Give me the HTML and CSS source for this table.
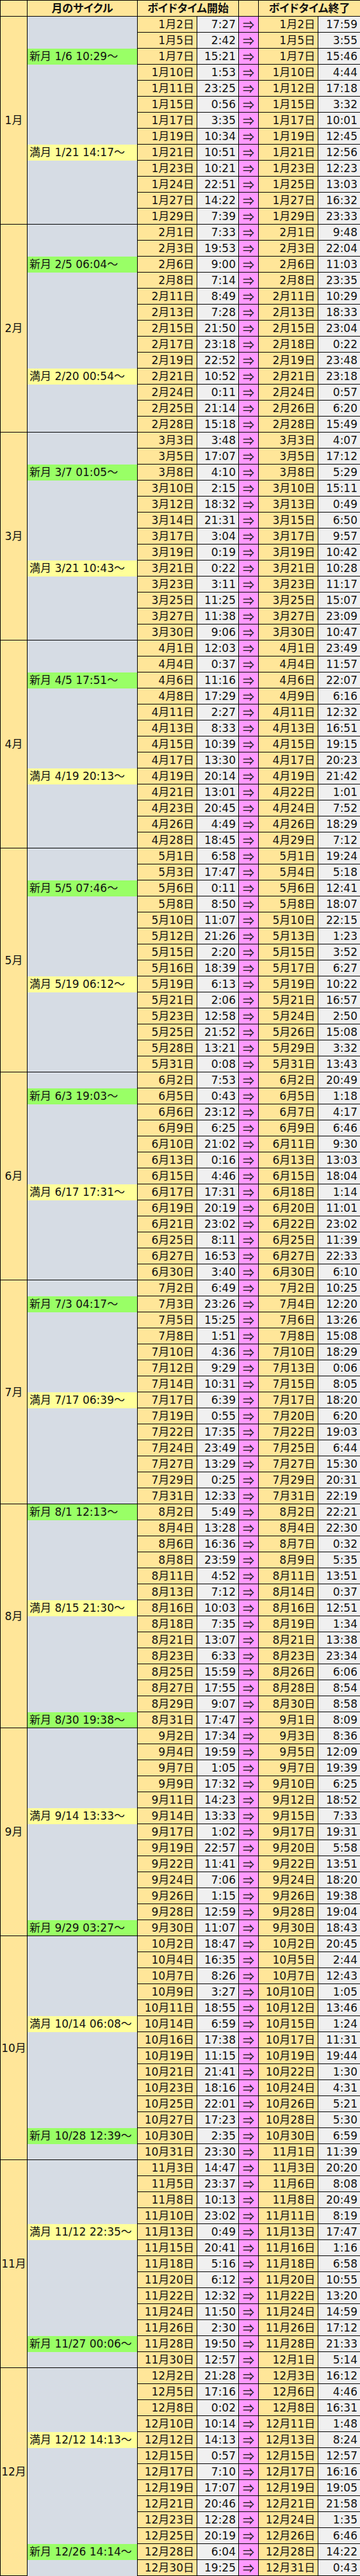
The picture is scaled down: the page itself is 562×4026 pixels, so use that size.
FILE: index.html
```html
<!DOCTYPE html>
<html lang="ja">
<head>
<meta charset="utf-8">
<title>ボイドタイム</title>
<link rel="stylesheet" href="styles.css">
</head>
<body>
<table class="vt">
<colgroup><col class="w1"><col class="w2"><col class="w3"><col class="w4"><col class="w5"><col class="w6"><col class="w7"></colgroup>
<thead>
<tr><th></th><th>月のサイクル</th><th colspan="2">ボイドタイム開始</th><th></th><th colspan="2">ボイドタイム終了</th></tr>
</thead>
<tbody class="m">
<tr><td class="mon" rowspan="13">1月</td><td class="cy" rowspan="2"></td><td class="d">1月2日</td><td class="t">7:27</td><td class="a">⇒</td><td class="d">1月2日</td><td class="t">17:59</td></tr>
<tr><td class="d">1月5日</td><td class="t">2:42</td><td class="a">⇒</td><td class="d">1月5日</td><td class="t">3:55</td></tr>
<tr><td class="nm">新月 1/6 10:29～</td><td class="d">1月7日</td><td class="t">15:21</td><td class="a">⇒</td><td class="d">1月7日</td><td class="t">15:46</td></tr>
<tr><td class="cy" rowspan="5"></td><td class="d">1月10日</td><td class="t">1:53</td><td class="a">⇒</td><td class="d">1月10日</td><td class="t">4:44</td></tr>
<tr><td class="d">1月11日</td><td class="t">23:25</td><td class="a">⇒</td><td class="d">1月12日</td><td class="t">17:18</td></tr>
<tr><td class="d">1月15日</td><td class="t">0:56</td><td class="a">⇒</td><td class="d">1月15日</td><td class="t">3:32</td></tr>
<tr><td class="d">1月17日</td><td class="t">3:35</td><td class="a">⇒</td><td class="d">1月17日</td><td class="t">10:01</td></tr>
<tr><td class="d">1月19日</td><td class="t">10:34</td><td class="a">⇒</td><td class="d">1月19日</td><td class="t">12:45</td></tr>
<tr><td class="fm">満月 1/21 14:17～</td><td class="d">1月21日</td><td class="t">10:51</td><td class="a">⇒</td><td class="d">1月21日</td><td class="t">12:56</td></tr>
<tr><td class="cy" rowspan="4"></td><td class="d">1月23日</td><td class="t">10:21</td><td class="a">⇒</td><td class="d">1月23日</td><td class="t">12:23</td></tr>
<tr><td class="d">1月24日</td><td class="t">22:51</td><td class="a">⇒</td><td class="d">1月25日</td><td class="t">13:03</td></tr>
<tr><td class="d">1月27日</td><td class="t">14:22</td><td class="a">⇒</td><td class="d">1月27日</td><td class="t">16:32</td></tr>
<tr><td class="d">1月29日</td><td class="t">7:39</td><td class="a">⇒</td><td class="d">1月29日</td><td class="t">23:33</td></tr>
</tbody>
<tbody class="m">
<tr><td class="mon" rowspan="13">2月</td><td class="cy" rowspan="2"></td><td class="d">2月1日</td><td class="t">7:33</td><td class="a">⇒</td><td class="d">2月1日</td><td class="t">9:48</td></tr>
<tr><td class="d">2月3日</td><td class="t">19:53</td><td class="a">⇒</td><td class="d">2月3日</td><td class="t">22:04</td></tr>
<tr><td class="nm">新月 2/5 06:04～</td><td class="d">2月6日</td><td class="t">9:00</td><td class="a">⇒</td><td class="d">2月6日</td><td class="t">11:03</td></tr>
<tr><td class="cy" rowspan="6"></td><td class="d">2月8日</td><td class="t">7:14</td><td class="a">⇒</td><td class="d">2月8日</td><td class="t">23:35</td></tr>
<tr><td class="d">2月11日</td><td class="t">8:49</td><td class="a">⇒</td><td class="d">2月11日</td><td class="t">10:29</td></tr>
<tr><td class="d">2月13日</td><td class="t">7:28</td><td class="a">⇒</td><td class="d">2月13日</td><td class="t">18:33</td></tr>
<tr><td class="d">2月15日</td><td class="t">21:50</td><td class="a">⇒</td><td class="d">2月15日</td><td class="t">23:04</td></tr>
<tr><td class="d">2月17日</td><td class="t">23:18</td><td class="a">⇒</td><td class="d">2月18日</td><td class="t">0:22</td></tr>
<tr><td class="d">2月19日</td><td class="t">22:52</td><td class="a">⇒</td><td class="d">2月19日</td><td class="t">23:48</td></tr>
<tr><td class="fm">満月 2/20 00:54～</td><td class="d">2月21日</td><td class="t">10:52</td><td class="a">⇒</td><td class="d">2月21日</td><td class="t">23:18</td></tr>
<tr><td class="cy" rowspan="3"></td><td class="d">2月24日</td><td class="t">0:11</td><td class="a">⇒</td><td class="d">2月24日</td><td class="t">0:57</td></tr>
<tr><td class="d">2月25日</td><td class="t">21:14</td><td class="a">⇒</td><td class="d">2月26日</td><td class="t">6:20</td></tr>
<tr><td class="d">2月28日</td><td class="t">15:18</td><td class="a">⇒</td><td class="d">2月28日</td><td class="t">15:49</td></tr>
</tbody>
<tbody class="m">
<tr><td class="mon" rowspan="13">3月</td><td class="cy" rowspan="2"></td><td class="d">3月3日</td><td class="t">3:48</td><td class="a">⇒</td><td class="d">3月3日</td><td class="t">4:07</td></tr>
<tr><td class="d">3月5日</td><td class="t">17:07</td><td class="a">⇒</td><td class="d">3月5日</td><td class="t">17:12</td></tr>
<tr><td class="nm">新月 3/7 01:05～</td><td class="d">3月8日</td><td class="t">4:10</td><td class="a">⇒</td><td class="d">3月8日</td><td class="t">5:29</td></tr>
<tr><td class="cy" rowspan="5"></td><td class="d">3月10日</td><td class="t">2:15</td><td class="a">⇒</td><td class="d">3月10日</td><td class="t">15:11</td></tr>
<tr><td class="d">3月12日</td><td class="t">18:32</td><td class="a">⇒</td><td class="d">3月13日</td><td class="t">0:49</td></tr>
<tr><td class="d">3月14日</td><td class="t">21:31</td><td class="a">⇒</td><td class="d">3月15日</td><td class="t">6:50</td></tr>
<tr><td class="d">3月17日</td><td class="t">3:04</td><td class="a">⇒</td><td class="d">3月17日</td><td class="t">9:57</td></tr>
<tr><td class="d">3月19日</td><td class="t">0:19</td><td class="a">⇒</td><td class="d">3月19日</td><td class="t">10:42</td></tr>
<tr><td class="fm">満月 3/21 10:43～</td><td class="d">3月21日</td><td class="t">0:22</td><td class="a">⇒</td><td class="d">3月21日</td><td class="t">10:28</td></tr>
<tr><td class="cy" rowspan="4"></td><td class="d">3月23日</td><td class="t">3:11</td><td class="a">⇒</td><td class="d">3月23日</td><td class="t">11:17</td></tr>
<tr><td class="d">3月25日</td><td class="t">11:25</td><td class="a">⇒</td><td class="d">3月25日</td><td class="t">15:07</td></tr>
<tr><td class="d">3月27日</td><td class="t">11:38</td><td class="a">⇒</td><td class="d">3月27日</td><td class="t">23:09</td></tr>
<tr><td class="d">3月30日</td><td class="t">9:06</td><td class="a">⇒</td><td class="d">3月30日</td><td class="t">10:47</td></tr>
</tbody>
<tbody class="m">
<tr><td class="mon" rowspan="13">4月</td><td class="cy" rowspan="2"></td><td class="d">4月1日</td><td class="t">12:03</td><td class="a">⇒</td><td class="d">4月1日</td><td class="t">23:49</td></tr>
<tr><td class="d">4月4日</td><td class="t">0:37</td><td class="a">⇒</td><td class="d">4月4日</td><td class="t">11:57</td></tr>
<tr><td class="nm">新月 4/5 17:51～</td><td class="d">4月6日</td><td class="t">11:16</td><td class="a">⇒</td><td class="d">4月6日</td><td class="t">22:07</td></tr>
<tr><td class="cy" rowspan="5"></td><td class="d">4月8日</td><td class="t">17:29</td><td class="a">⇒</td><td class="d">4月9日</td><td class="t">6:16</td></tr>
<tr><td class="d">4月11日</td><td class="t">2:27</td><td class="a">⇒</td><td class="d">4月11日</td><td class="t">12:32</td></tr>
<tr><td class="d">4月13日</td><td class="t">8:33</td><td class="a">⇒</td><td class="d">4月13日</td><td class="t">16:51</td></tr>
<tr><td class="d">4月15日</td><td class="t">10:39</td><td class="a">⇒</td><td class="d">4月15日</td><td class="t">19:15</td></tr>
<tr><td class="d">4月17日</td><td class="t">13:30</td><td class="a">⇒</td><td class="d">4月17日</td><td class="t">20:23</td></tr>
<tr><td class="fm">満月 4/19 20:13～</td><td class="d">4月19日</td><td class="t">20:14</td><td class="a">⇒</td><td class="d">4月19日</td><td class="t">21:42</td></tr>
<tr><td class="cy" rowspan="4"></td><td class="d">4月21日</td><td class="t">13:01</td><td class="a">⇒</td><td class="d">4月22日</td><td class="t">1:01</td></tr>
<tr><td class="d">4月23日</td><td class="t">20:45</td><td class="a">⇒</td><td class="d">4月24日</td><td class="t">7:52</td></tr>
<tr><td class="d">4月26日</td><td class="t">4:49</td><td class="a">⇒</td><td class="d">4月26日</td><td class="t">18:29</td></tr>
<tr><td class="d">4月28日</td><td class="t">18:45</td><td class="a">⇒</td><td class="d">4月29日</td><td class="t">7:12</td></tr>
</tbody>
<tbody class="m">
<tr><td class="mon" rowspan="14">5月</td><td class="cy" rowspan="2"></td><td class="d">5月1日</td><td class="t">6:58</td><td class="a">⇒</td><td class="d">5月1日</td><td class="t">19:24</td></tr>
<tr><td class="d">5月3日</td><td class="t">17:47</td><td class="a">⇒</td><td class="d">5月4日</td><td class="t">5:18</td></tr>
<tr><td class="nm">新月 5/5 07:46～</td><td class="d">5月6日</td><td class="t">0:11</td><td class="a">⇒</td><td class="d">5月6日</td><td class="t">12:41</td></tr>
<tr><td class="cy" rowspan="5"></td><td class="d">5月8日</td><td class="t">8:50</td><td class="a">⇒</td><td class="d">5月8日</td><td class="t">18:07</td></tr>
<tr><td class="d">5月10日</td><td class="t">11:07</td><td class="a">⇒</td><td class="d">5月10日</td><td class="t">22:15</td></tr>
<tr><td class="d">5月12日</td><td class="t">21:26</td><td class="a">⇒</td><td class="d">5月13日</td><td class="t">1:23</td></tr>
<tr><td class="d">5月15日</td><td class="t">2:20</td><td class="a">⇒</td><td class="d">5月15日</td><td class="t">3:52</td></tr>
<tr><td class="d">5月16日</td><td class="t">18:39</td><td class="a">⇒</td><td class="d">5月17日</td><td class="t">6:27</td></tr>
<tr><td class="fm">満月 5/19 06:12～</td><td class="d">5月19日</td><td class="t">6:13</td><td class="a">⇒</td><td class="d">5月19日</td><td class="t">10:22</td></tr>
<tr><td class="cy" rowspan="5"></td><td class="d">5月21日</td><td class="t">2:06</td><td class="a">⇒</td><td class="d">5月21日</td><td class="t">16:57</td></tr>
<tr><td class="d">5月23日</td><td class="t">12:58</td><td class="a">⇒</td><td class="d">5月24日</td><td class="t">2:50</td></tr>
<tr><td class="d">5月25日</td><td class="t">21:52</td><td class="a">⇒</td><td class="d">5月26日</td><td class="t">15:08</td></tr>
<tr><td class="d">5月28日</td><td class="t">13:21</td><td class="a">⇒</td><td class="d">5月29日</td><td class="t">3:32</td></tr>
<tr><td class="d">5月31日</td><td class="t">0:08</td><td class="a">⇒</td><td class="d">5月31日</td><td class="t">13:43</td></tr>
</tbody>
<tbody class="m">
<tr><td class="mon" rowspan="13">6月</td><td class="cy"></td><td class="d">6月2日</td><td class="t">7:53</td><td class="a">⇒</td><td class="d">6月2日</td><td class="t">20:49</td></tr>
<tr><td class="nm">新月 6/3 19:03～</td><td class="d">6月5日</td><td class="t">0:43</td><td class="a">⇒</td><td class="d">6月5日</td><td class="t">1:18</td></tr>
<tr><td class="cy" rowspan="5"></td><td class="d">6月6日</td><td class="t">23:12</td><td class="a">⇒</td><td class="d">6月7日</td><td class="t">4:17</td></tr>
<tr><td class="d">6月9日</td><td class="t">6:25</td><td class="a">⇒</td><td class="d">6月9日</td><td class="t">6:46</td></tr>
<tr><td class="d">6月10日</td><td class="t">21:02</td><td class="a">⇒</td><td class="d">6月11日</td><td class="t">9:30</td></tr>
<tr><td class="d">6月13日</td><td class="t">0:16</td><td class="a">⇒</td><td class="d">6月13日</td><td class="t">13:03</td></tr>
<tr><td class="d">6月15日</td><td class="t">4:46</td><td class="a">⇒</td><td class="d">6月15日</td><td class="t">18:04</td></tr>
<tr><td class="fm">満月 6/17 17:31～</td><td class="d">6月17日</td><td class="t">17:31</td><td class="a">⇒</td><td class="d">6月18日</td><td class="t">1:14</td></tr>
<tr><td class="cy" rowspan="5"></td><td class="d">6月19日</td><td class="t">20:19</td><td class="a">⇒</td><td class="d">6月20日</td><td class="t">11:01</td></tr>
<tr><td class="d">6月21日</td><td class="t">23:02</td><td class="a">⇒</td><td class="d">6月22日</td><td class="t">23:02</td></tr>
<tr><td class="d">6月25日</td><td class="t">8:11</td><td class="a">⇒</td><td class="d">6月25日</td><td class="t">11:39</td></tr>
<tr><td class="d">6月27日</td><td class="t">16:53</td><td class="a">⇒</td><td class="d">6月27日</td><td class="t">22:33</td></tr>
<tr><td class="d">6月30日</td><td class="t">3:40</td><td class="a">⇒</td><td class="d">6月30日</td><td class="t">6:10</td></tr>
</tbody>
<tbody class="m">
<tr><td class="mon" rowspan="14">7月</td><td class="cy"></td><td class="d">7月2日</td><td class="t">6:49</td><td class="a">⇒</td><td class="d">7月2日</td><td class="t">10:25</td></tr>
<tr><td class="nm">新月 7/3 04:17～</td><td class="d">7月3日</td><td class="t">23:26</td><td class="a">⇒</td><td class="d">7月4日</td><td class="t">12:20</td></tr>
<tr><td class="cy" rowspan="5"></td><td class="d">7月5日</td><td class="t">15:25</td><td class="a">⇒</td><td class="d">7月6日</td><td class="t">13:26</td></tr>
<tr><td class="d">7月8日</td><td class="t">1:51</td><td class="a">⇒</td><td class="d">7月8日</td><td class="t">15:08</td></tr>
<tr><td class="d">7月10日</td><td class="t">4:36</td><td class="a">⇒</td><td class="d">7月10日</td><td class="t">18:29</td></tr>
<tr><td class="d">7月12日</td><td class="t">9:29</td><td class="a">⇒</td><td class="d">7月13日</td><td class="t">0:06</td></tr>
<tr><td class="d">7月14日</td><td class="t">10:31</td><td class="a">⇒</td><td class="d">7月15日</td><td class="t">8:05</td></tr>
<tr><td class="fm">満月 7/17 06:39～</td><td class="d">7月17日</td><td class="t">6:39</td><td class="a">⇒</td><td class="d">7月17日</td><td class="t">18:20</td></tr>
<tr><td class="cy" rowspan="6"></td><td class="d">7月19日</td><td class="t">0:55</td><td class="a">⇒</td><td class="d">7月20日</td><td class="t">6:20</td></tr>
<tr><td class="d">7月22日</td><td class="t">17:35</td><td class="a">⇒</td><td class="d">7月22日</td><td class="t">19:03</td></tr>
<tr><td class="d">7月24日</td><td class="t">23:49</td><td class="a">⇒</td><td class="d">7月25日</td><td class="t">6:44</td></tr>
<tr><td class="d">7月27日</td><td class="t">13:29</td><td class="a">⇒</td><td class="d">7月27日</td><td class="t">15:30</td></tr>
<tr><td class="d">7月29日</td><td class="t">0:25</td><td class="a">⇒</td><td class="d">7月29日</td><td class="t">20:31</td></tr>
<tr><td class="d">7月31日</td><td class="t">12:33</td><td class="a">⇒</td><td class="d">7月31日</td><td class="t">22:19</td></tr>
</tbody>
<tbody class="m">
<tr><td class="mon" rowspan="14">8月</td><td class="nm">新月 8/1 12:13～</td><td class="d">8月2日</td><td class="t">5:49</td><td class="a">⇒</td><td class="d">8月2日</td><td class="t">22:21</td></tr>
<tr><td class="cy" rowspan="5"></td><td class="d">8月4日</td><td class="t">13:28</td><td class="a">⇒</td><td class="d">8月4日</td><td class="t">22:30</td></tr>
<tr><td class="d">8月6日</td><td class="t">16:36</td><td class="a">⇒</td><td class="d">8月7日</td><td class="t">0:32</td></tr>
<tr><td class="d">8月8日</td><td class="t">23:59</td><td class="a">⇒</td><td class="d">8月9日</td><td class="t">5:35</td></tr>
<tr><td class="d">8月11日</td><td class="t">4:52</td><td class="a">⇒</td><td class="d">8月11日</td><td class="t">13:51</td></tr>
<tr><td class="d">8月13日</td><td class="t">7:12</td><td class="a">⇒</td><td class="d">8月14日</td><td class="t">0:37</td></tr>
<tr><td class="fm">満月 8/15 21:30～</td><td class="d">8月16日</td><td class="t">10:03</td><td class="a">⇒</td><td class="d">8月16日</td><td class="t">12:51</td></tr>
<tr><td class="cy" rowspan="6"></td><td class="d">8月18日</td><td class="t">7:35</td><td class="a">⇒</td><td class="d">8月19日</td><td class="t">1:34</td></tr>
<tr><td class="d">8月21日</td><td class="t">13:07</td><td class="a">⇒</td><td class="d">8月21日</td><td class="t">13:38</td></tr>
<tr><td class="d">8月23日</td><td class="t">6:33</td><td class="a">⇒</td><td class="d">8月23日</td><td class="t">23:34</td></tr>
<tr><td class="d">8月25日</td><td class="t">15:59</td><td class="a">⇒</td><td class="d">8月26日</td><td class="t">6:06</td></tr>
<tr><td class="d">8月27日</td><td class="t">17:55</td><td class="a">⇒</td><td class="d">8月28日</td><td class="t">8:54</td></tr>
<tr><td class="d">8月29日</td><td class="t">9:07</td><td class="a">⇒</td><td class="d">8月30日</td><td class="t">8:58</td></tr>
<tr><td class="nm">新月 8/30 19:38～</td><td class="d">8月31日</td><td class="t">17:47</td><td class="a">⇒</td><td class="d">9月1日</td><td class="t">8:09</td></tr>
</tbody>
<tbody class="m">
<tr><td class="mon" rowspan="13">9月</td><td class="cy" rowspan="5"></td><td class="d">9月2日</td><td class="t">17:34</td><td class="a">⇒</td><td class="d">9月3日</td><td class="t">8:36</td></tr>
<tr><td class="d">9月4日</td><td class="t">19:59</td><td class="a">⇒</td><td class="d">9月5日</td><td class="t">12:09</td></tr>
<tr><td class="d">9月7日</td><td class="t">1:05</td><td class="a">⇒</td><td class="d">9月7日</td><td class="t">19:39</td></tr>
<tr><td class="d">9月9日</td><td class="t">17:32</td><td class="a">⇒</td><td class="d">9月10日</td><td class="t">6:25</td></tr>
<tr><td class="d">9月11日</td><td class="t">14:23</td><td class="a">⇒</td><td class="d">9月12日</td><td class="t">18:52</td></tr>
<tr><td class="fm">満月 9/14 13:33～</td><td class="d">9月14日</td><td class="t">13:33</td><td class="a">⇒</td><td class="d">9月15日</td><td class="t">7:33</td></tr>
<tr><td class="cy" rowspan="6"></td><td class="d">9月17日</td><td class="t">1:02</td><td class="a">⇒</td><td class="d">9月17日</td><td class="t">19:31</td></tr>
<tr><td class="d">9月19日</td><td class="t">22:57</td><td class="a">⇒</td><td class="d">9月20日</td><td class="t">5:58</td></tr>
<tr><td class="d">9月22日</td><td class="t">11:41</td><td class="a">⇒</td><td class="d">9月22日</td><td class="t">13:51</td></tr>
<tr><td class="d">9月24日</td><td class="t">7:06</td><td class="a">⇒</td><td class="d">9月24日</td><td class="t">18:20</td></tr>
<tr><td class="d">9月26日</td><td class="t">1:15</td><td class="a">⇒</td><td class="d">9月26日</td><td class="t">19:38</td></tr>
<tr><td class="d">9月28日</td><td class="t">12:59</td><td class="a">⇒</td><td class="d">9月28日</td><td class="t">19:04</td></tr>
<tr><td class="nm">新月 9/29 03:27～</td><td class="d">9月30日</td><td class="t">11:07</td><td class="a">⇒</td><td class="d">9月30日</td><td class="t">18:43</td></tr>
</tbody>
<tbody class="m">
<tr><td class="mon" rowspan="14">10月</td><td class="cy" rowspan="5"></td><td class="d">10月2日</td><td class="t">18:47</td><td class="a">⇒</td><td class="d">10月2日</td><td class="t">20:45</td></tr>
<tr><td class="d">10月4日</td><td class="t">16:35</td><td class="a">⇒</td><td class="d">10月5日</td><td class="t">2:44</td></tr>
<tr><td class="d">10月7日</td><td class="t">8:26</td><td class="a">⇒</td><td class="d">10月7日</td><td class="t">12:43</td></tr>
<tr><td class="d">10月9日</td><td class="t">3:27</td><td class="a">⇒</td><td class="d">10月10日</td><td class="t">1:05</td></tr>
<tr><td class="d">10月11日</td><td class="t">18:55</td><td class="a">⇒</td><td class="d">10月12日</td><td class="t">13:46</td></tr>
<tr><td class="fm">満月 10/14 06:08～</td><td class="d">10月14日</td><td class="t">6:59</td><td class="a">⇒</td><td class="d">10月15日</td><td class="t">1:24</td></tr>
<tr><td class="cy" rowspan="6"></td><td class="d">10月16日</td><td class="t">17:38</td><td class="a">⇒</td><td class="d">10月17日</td><td class="t">11:31</td></tr>
<tr><td class="d">10月19日</td><td class="t">11:15</td><td class="a">⇒</td><td class="d">10月19日</td><td class="t">19:44</td></tr>
<tr><td class="d">10月21日</td><td class="t">21:41</td><td class="a">⇒</td><td class="d">10月22日</td><td class="t">1:30</td></tr>
<tr><td class="d">10月23日</td><td class="t">18:16</td><td class="a">⇒</td><td class="d">10月24日</td><td class="t">4:31</td></tr>
<tr><td class="d">10月25日</td><td class="t">22:01</td><td class="a">⇒</td><td class="d">10月26日</td><td class="t">5:21</td></tr>
<tr><td class="d">10月27日</td><td class="t">17:23</td><td class="a">⇒</td><td class="d">10月28日</td><td class="t">5:30</td></tr>
<tr><td class="nm">新月 10/28 12:39～</td><td class="d">10月30日</td><td class="t">2:35</td><td class="a">⇒</td><td class="d">10月30日</td><td class="t">6:59</td></tr>
<tr><td class="cy"></td><td class="d">10月31日</td><td class="t">23:30</td><td class="a">⇒</td><td class="d">11月1日</td><td class="t">11:39</td></tr>
</tbody>
<tbody class="m">
<tr><td class="mon" rowspan="13">11月</td><td class="cy" rowspan="4"></td><td class="d">11月3日</td><td class="t">14:47</td><td class="a">⇒</td><td class="d">11月3日</td><td class="t">20:20</td></tr>
<tr><td class="d">11月5日</td><td class="t">23:37</td><td class="a">⇒</td><td class="d">11月6日</td><td class="t">8:08</td></tr>
<tr><td class="d">11月8日</td><td class="t">10:13</td><td class="a">⇒</td><td class="d">11月8日</td><td class="t">20:49</td></tr>
<tr><td class="d">11月10日</td><td class="t">23:02</td><td class="a">⇒</td><td class="d">11月11日</td><td class="t">8:19</td></tr>
<tr><td class="fm">満月 11/12 22:35～</td><td class="d">11月13日</td><td class="t">0:49</td><td class="a">⇒</td><td class="d">11月13日</td><td class="t">17:47</td></tr>
<tr><td class="cy" rowspan="6"></td><td class="d">11月15日</td><td class="t">20:41</td><td class="a">⇒</td><td class="d">11月16日</td><td class="t">1:16</td></tr>
<tr><td class="d">11月18日</td><td class="t">5:16</td><td class="a">⇒</td><td class="d">11月18日</td><td class="t">6:58</td></tr>
<tr><td class="d">11月20日</td><td class="t">6:12</td><td class="a">⇒</td><td class="d">11月20日</td><td class="t">10:55</td></tr>
<tr><td class="d">11月22日</td><td class="t">12:32</td><td class="a">⇒</td><td class="d">11月22日</td><td class="t">13:20</td></tr>
<tr><td class="d">11月24日</td><td class="t">11:50</td><td class="a">⇒</td><td class="d">11月24日</td><td class="t">14:59</td></tr>
<tr><td class="d">11月26日</td><td class="t">2:30</td><td class="a">⇒</td><td class="d">11月26日</td><td class="t">17:12</td></tr>
<tr><td class="nm">新月 11/27 00:06～</td><td class="d">11月28日</td><td class="t">19:50</td><td class="a">⇒</td><td class="d">11月28日</td><td class="t">21:33</td></tr>
<tr><td class="cy"></td><td class="d">11月30日</td><td class="t">12:57</td><td class="a">⇒</td><td class="d">12月1日</td><td class="t">5:14</td></tr>
</tbody>
<tbody class="m">
<tr><td class="mon" rowspan="13">12月</td><td class="cy" rowspan="4"></td><td class="d">12月2日</td><td class="t">21:28</td><td class="a">⇒</td><td class="d">12月3日</td><td class="t">16:12</td></tr>
<tr><td class="d">12月5日</td><td class="t">17:16</td><td class="a">⇒</td><td class="d">12月6日</td><td class="t">4:46</td></tr>
<tr><td class="d">12月8日</td><td class="t">0:02</td><td class="a">⇒</td><td class="d">12月8日</td><td class="t">16:31</td></tr>
<tr><td class="d">12月10日</td><td class="t">10:14</td><td class="a">⇒</td><td class="d">12月11日</td><td class="t">1:48</td></tr>
<tr><td class="fm">満月 12/12 14:13～</td><td class="d">12月12日</td><td class="t">14:13</td><td class="a">⇒</td><td class="d">12月13日</td><td class="t">8:24</td></tr>
<tr><td class="cy" rowspan="6"></td><td class="d">12月15日</td><td class="t">0:57</td><td class="a">⇒</td><td class="d">12月15日</td><td class="t">12:57</td></tr>
<tr><td class="d">12月17日</td><td class="t">7:10</td><td class="a">⇒</td><td class="d">12月17日</td><td class="t">16:16</td></tr>
<tr><td class="d">12月19日</td><td class="t">17:07</td><td class="a">⇒</td><td class="d">12月19日</td><td class="t">19:05</td></tr>
<tr><td class="d">12月21日</td><td class="t">20:46</td><td class="a">⇒</td><td class="d">12月21日</td><td class="t">21:58</td></tr>
<tr><td class="d">12月23日</td><td class="t">12:28</td><td class="a">⇒</td><td class="d">12月24日</td><td class="t">1:35</td></tr>
<tr><td class="d">12月25日</td><td class="t">20:19</td><td class="a">⇒</td><td class="d">12月26日</td><td class="t">6:46</td></tr>
<tr><td class="nm">新月 12/26 14:14～</td><td class="d">12月28日</td><td class="t">6:04</td><td class="a">⇒</td><td class="d">12月28日</td><td class="t">14:22</td></tr>
<tr><td class="cy"></td><td class="d">12月30日</td><td class="t">19:25</td><td class="a">⇒</td><td class="d">12月31日</td><td class="t">0:43</td></tr>
</tbody>
</table>
</body>
</html>
```
FILE: styles.css
```css
html, body {
  margin: 0;
  padding: 0;
  background: #ffffff;
}

.vt {
  border-collapse: collapse;
  table-layout: fixed;
  width: 562px;
  font-family: "DejaVu Sans", "Noto Sans CJK JP", sans-serif;
  font-size: 17px;
  color: #111111;
}

.w1 { width: 42px; }
.w2 { width: 172px; }
.w3 { width: 93px; }
.w4 { width: 65px; }
.w5 { width: 31px; }
.w6 { width: 93px; }
.w7 { width: 66px; }

.vt th,
.vt td {
  padding: 0;
  height: 24px;
  line-height: 20px;
  border: 1px solid #000000;
  white-space: nowrap;
  overflow: hidden;
  vertical-align: middle;
}

.vt th {
  background: #ffe699;
  font-weight: bold;
  text-align: center;
  font-feature-settings: "palt";
}

.m {
  border-top: 1px solid #000000;
}

.vt .mon {
  background: #ffe699;
  text-align: center;
}

.vt .cy,
.vt .nm,
.vt .fm {
  border-top: none;
  border-bottom: none;
  text-align: left;
  padding-left: 3px;
}

.vt .cy { background: #d6dce4; }
.vt .nm { background: #99ff66; }
.vt .fm { background: #ffff99; }

.vt .d {
  background: #ffe699;
  text-align: right;
  padding-right: 4px;
}

.vt .t {
  background: #f0f0f0;
  text-align: right;
  padding-right: 4px;
}

.vt .a {
  background: #ff99ff;
  text-align: center;
  font-family: "Noto Sans CJK JP", sans-serif;
  font-size: 18px;
}
```
